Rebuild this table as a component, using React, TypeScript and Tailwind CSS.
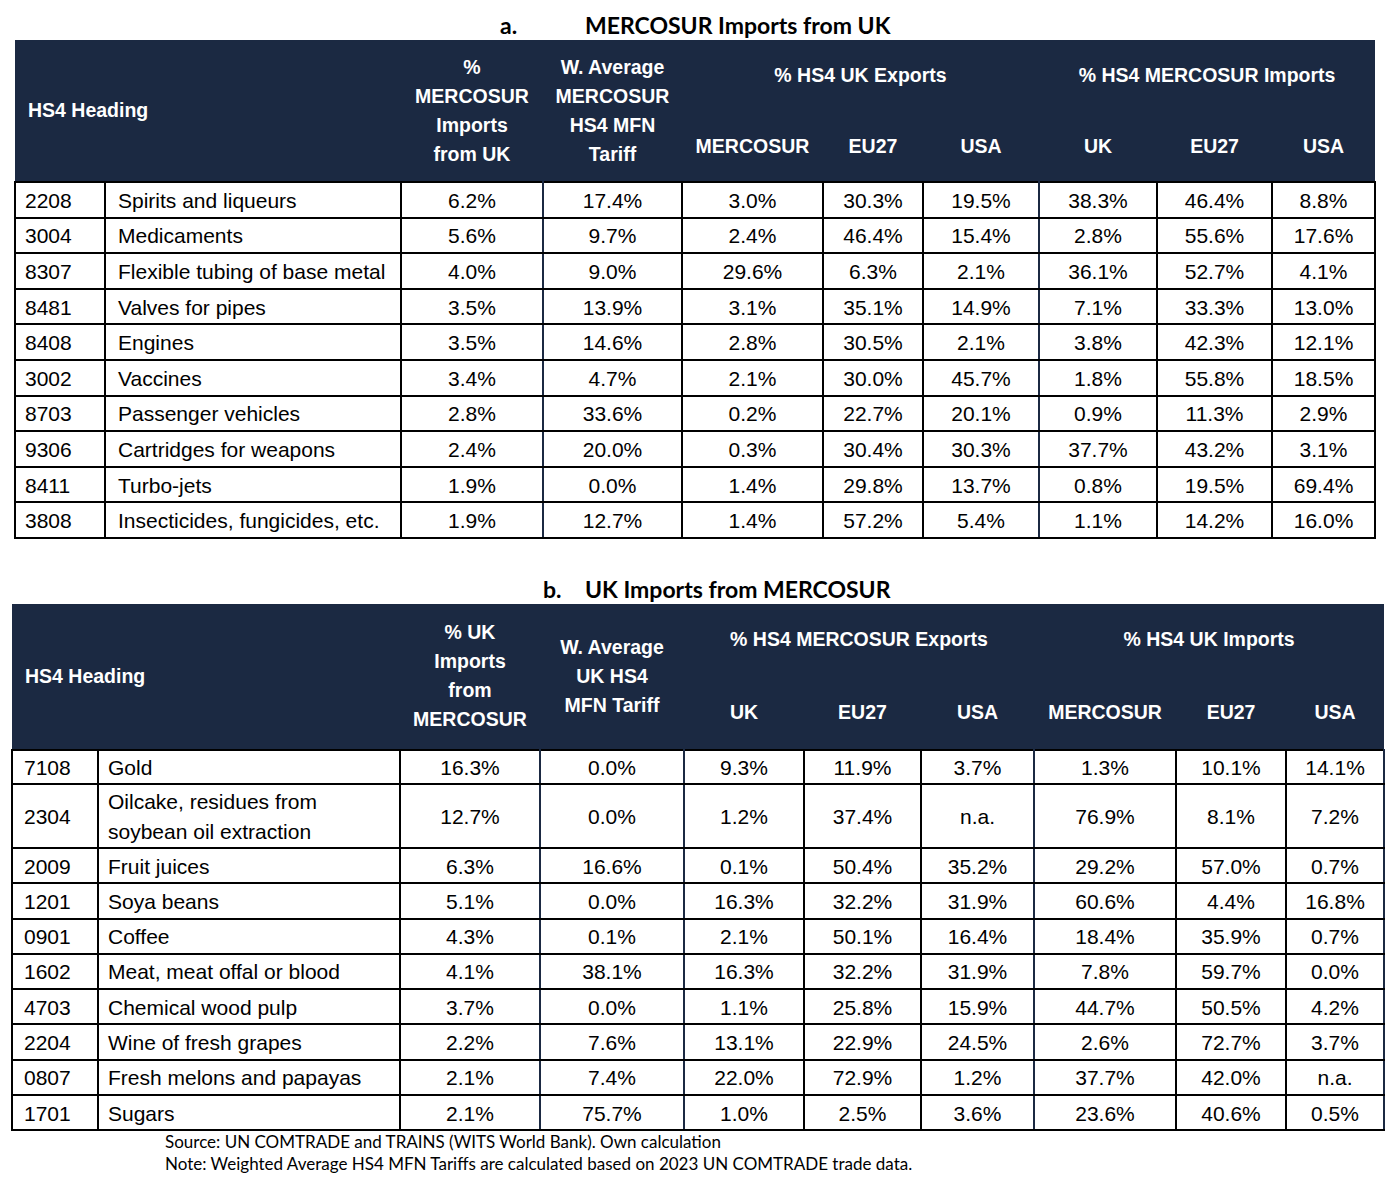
import React from "react";

type Row = { code: string; desc: React.ReactNode; vals: string[]; tall?: boolean };

const rowsA: Row[] = [
  { code: "2208", desc: "Spirits and liqueurs", vals: ["6.2%", "17.4%", "3.0%", "30.3%", "19.5%", "38.3%", "46.4%", "8.8%"] },
  { code: "3004", desc: "Medicaments", vals: ["5.6%", "9.7%", "2.4%", "46.4%", "15.4%", "2.8%", "55.6%", "17.6%"] },
  { code: "8307", desc: "Flexible tubing of base metal", vals: ["4.0%", "9.0%", "29.6%", "6.3%", "2.1%", "36.1%", "52.7%", "4.1%"] },
  { code: "8481", desc: "Valves for pipes", vals: ["3.5%", "13.9%", "3.1%", "35.1%", "14.9%", "7.1%", "33.3%", "13.0%"] },
  { code: "8408", desc: "Engines", vals: ["3.5%", "14.6%", "2.8%", "30.5%", "2.1%", "3.8%", "42.3%", "12.1%"] },
  { code: "3002", desc: "Vaccines", vals: ["3.4%", "4.7%", "2.1%", "30.0%", "45.7%", "1.8%", "55.8%", "18.5%"] },
  { code: "8703", desc: "Passenger vehicles", vals: ["2.8%", "33.6%", "0.2%", "22.7%", "20.1%", "0.9%", "11.3%", "2.9%"] },
  { code: "9306", desc: "Cartridges for weapons", vals: ["2.4%", "20.0%", "0.3%", "30.4%", "30.3%", "37.7%", "43.2%", "3.1%"] },
  { code: "8411", desc: "Turbo-jets", vals: ["1.9%", "0.0%", "1.4%", "29.8%", "13.7%", "0.8%", "19.5%", "69.4%"] },
  { code: "3808", desc: "Insecticides, fungicides, etc.", vals: ["1.9%", "12.7%", "1.4%", "57.2%", "5.4%", "1.1%", "14.2%", "16.0%"] },
];

const rowsB: Row[] = [
  { code: "7108", desc: "Gold", vals: ["16.3%", "0.0%", "9.3%", "11.9%", "3.7%", "1.3%", "10.1%", "14.1%"] },
  {
    code: "2304",
    desc: (
      <>
        Oilcake, residues from
        <br />
        soybean oil extraction
      </>
    ),
    vals: ["12.7%", "0.0%", "1.2%", "37.4%", "n.a.", "76.9%", "8.1%", "7.2%"],
    tall: true,
  },
  { code: "2009", desc: "Fruit juices", vals: ["6.3%", "16.6%", "0.1%", "50.4%", "35.2%", "29.2%", "57.0%", "0.7%"] },
  { code: "1201", desc: "Soya beans", vals: ["5.1%", "0.0%", "16.3%", "32.2%", "31.9%", "60.6%", "4.4%", "16.8%"] },
  { code: "0901", desc: "Coffee", vals: ["4.3%", "0.1%", "2.1%", "50.1%", "16.4%", "18.4%", "35.9%", "0.7%"] },
  { code: "1602", desc: "Meat, meat offal or blood", vals: ["4.1%", "38.1%", "16.3%", "32.2%", "31.9%", "7.8%", "59.7%", "0.0%"] },
  { code: "4703", desc: "Chemical wood pulp", vals: ["3.7%", "0.0%", "1.1%", "25.8%", "15.9%", "44.7%", "50.5%", "4.2%"] },
  { code: "2204", desc: "Wine of fresh grapes", vals: ["2.2%", "7.6%", "13.1%", "22.9%", "24.5%", "2.6%", "72.7%", "3.7%"] },
  { code: "0807", desc: "Fresh melons and papayas", vals: ["2.1%", "7.4%", "22.0%", "72.9%", "1.2%", "37.7%", "42.0%", "n.a."] },
  { code: "1701", desc: "Sugars", vals: ["2.1%", "75.7%", "1.0%", "2.5%", "3.6%", "23.6%", "40.6%", "0.5%"] },
];

const NAVY = "bg-[#1b2942]";

function App() {
  return (
    <div className="w-[1396px] h-[1190px] bg-white text-black font-['Liberation_Sans',Arial,sans-serif] overflow-hidden">
      {/* Title a */}
      <div className="pt-[11px] h-[40px] flex items-center pl-[500px] font-['Lato',sans-serif] font-bold text-[23px] leading-[29px]">
        <span className="w-[85px]">a.</span>
        <span>MERCOSUR Imports from UK</span>
      </div>

      {/* Table a */}
      <div className="pl-[14px]">
        <table className="table-fixed border-collapse w-[1360px]">
          <colgroup>
            <col className="w-[90px]" />
            <col className="w-[296px]" />
            <col className="w-[142px]" />
            <col className="w-[139px]" />
            <col className="w-[141px]" />
            <col className="w-[100px]" />
            <col className="w-[116px]" />
            <col className="w-[118px]" />
            <col className="w-[115px]" />
            <col className="w-[103px]" />
          </colgroup>
          <thead className={`${NAVY} text-white text-[19.5px] font-bold`}>
            <tr className="h-[72px]">
              <th rowSpan={2} colSpan={2} className="text-left pl-[13px] font-bold">
                HS4 Heading
              </th>
              <th rowSpan={2} className="text-center font-bold leading-[29px]">
                %<br />MERCOSUR<br />Imports<br />from UK
              </th>
              <th rowSpan={2} className="text-center font-bold leading-[29px]">
                W. Average<br />MERCOSUR<br />HS4 MFN<br />Tariff
              </th>
              <th colSpan={3} className="text-center font-bold">
                % HS4 UK Exports
              </th>
              <th colSpan={3} className="text-center font-bold">
                % HS4 MERCOSUR Imports
              </th>
            </tr>
            <tr className="h-[70px]">
              <th className="text-center font-bold">MERCOSUR</th>
              <th className="text-center font-bold">EU27</th>
              <th className="text-center font-bold">USA</th>
              <th className="text-center font-bold">UK</th>
              <th className="text-center font-bold">EU27</th>
              <th className="text-center font-bold">USA</th>
            </tr>
          </thead>
          <tbody className="text-[21px]">
            {rowsA.map((r) => (
              <tr key={r.code} className="h-[35.6px]">
                <td className="border-2 border-black pl-[9px] pt-[2px] leading-[24px]">{r.code}</td>
                <td className="border-2 border-black pl-[12px] pt-[2px] leading-[24px]">{r.desc}</td>
                {r.vals.map((v, i) => (
                  <td
                    key={i}
                    className={`border-2 border-black text-center pt-[2px] leading-[24px] ${
                      i === 0 || i === 4 ? "border-r-[#1b2942]" : ""
                    }`}
                  >
                    {v}
                  </td>
                ))}
              </tr>
            ))}
          </tbody>
        </table>
      </div>

      {/* Title b */}
      <div className="mt-[36px] h-[29px] flex items-center pl-[543px] font-['Lato',sans-serif] font-bold text-[23px] leading-[29px]">
        <span className="w-[42px]">b.</span>
        <span>UK Imports from MERCOSUR</span>
      </div>

      {/* Table b */}
      <div className="pl-[11px]">
        <table className="table-fixed border-collapse w-[1372px]">
          <colgroup>
            <col className="w-[86px]" />
            <col className="w-[302px]" />
            <col className="w-[140px]" />
            <col className="w-[144px]" />
            <col className="w-[120px]" />
            <col className="w-[117px]" />
            <col className="w-[113px]" />
            <col className="w-[142px]" />
            <col className="w-[110px]" />
            <col className="w-[98px]" />
          </colgroup>
          <thead className={`${NAVY} text-white text-[19.5px] font-bold`}>
            <tr className="h-[72px]">
              <th rowSpan={2} colSpan={2} className="text-left pl-[13px] font-bold">
                HS4 Heading
              </th>
              <th rowSpan={2} className="text-center font-bold leading-[29px]">
                % UK<br />Imports<br />from<br />MERCOSUR
              </th>
              <th rowSpan={2} className="text-center font-bold leading-[29px]">
                W. Average<br />UK HS4<br />MFN Tariff
              </th>
              <th colSpan={3} className="text-center font-bold">
                % HS4 MERCOSUR Exports
              </th>
              <th colSpan={3} className="text-center font-bold">
                % HS4 UK Imports
              </th>
            </tr>
            <tr className="h-[74px]">
              <th className="text-center font-bold">UK</th>
              <th className="text-center font-bold">EU27</th>
              <th className="text-center font-bold">USA</th>
              <th className="text-center font-bold">MERCOSUR</th>
              <th className="text-center font-bold">EU27</th>
              <th className="text-center font-bold">USA</th>
            </tr>
          </thead>
          <tbody className="text-[21px]">
            {rowsB.map((r, ri) => (
              <tr key={r.code} className={r.tall ? "h-[63px]" : ri === 0 ? "h-[34px]" : "h-[35.3px]"}>
                <td className="border-2 border-black pl-[11px] pt-[2px] leading-[24px]">{r.code}</td>
                <td className={`border-2 border-black pl-[9px] pt-[2px] ${r.tall ? "leading-[30px]" : "leading-[24px]"}`}>
                  {r.desc}
                </td>
                {r.vals.map((v, i) => (
                  <td
                    key={i}
                    className={`border-2 border-black text-center pt-[2px] leading-[24px] ${
                      i === 0 || i === 1 || i === 4 ? "border-r-[#1b2942]" : ""
                    } ${i === 7 ? "border-r-[#1b2942]" : ""}`}
                  >
                    {v}
                  </td>
                ))}
              </tr>
            ))}
          </tbody>
        </table>
      </div>

      {/* Footer */}
      <div className="pl-[165px] font-['Lato',sans-serif] text-[17px] leading-[22px]">
        <div>Source: UN COMTRADE and TRAINS (WITS World Bank). Own calculation</div>
        <div>Note: Weighted Average HS4 MFN Tariffs are calculated based on 2023 UN COMTRADE trade data.</div>
      </div>
    </div>
  );
}

export default App;
